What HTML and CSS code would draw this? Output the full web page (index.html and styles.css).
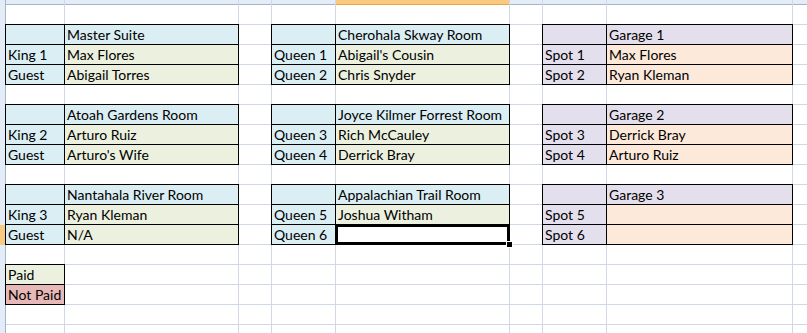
FILE: index.html
```html
<!DOCTYPE html>
<html>
<head>
<meta charset="utf-8">
<link rel="stylesheet" href="styles.css">
</head>
<body>
<div class="sheet">
  <div class="colhead"></div>
  <div class="colhead-sel"></div>
  <div class="rowhead"></div>
  <div class="rowhead-sel"></div>

  <div class="vline v2"></div><div class="vline v3"></div><div class="vline v4"></div>
  <div class="vline v5"></div><div class="vline v6"></div><div class="vline v7"></div>
  <div class="vline v8"></div><div class="vline v9"></div>

  <div class="hline h2"></div><div class="hline h3"></div><div class="hline h4"></div>
  <div class="hline h5"></div><div class="hline h6"></div><div class="hline h7"></div>
  <div class="hline h8"></div><div class="hline h9"></div><div class="hline h10"></div>
  <div class="hline h11"></div><div class="hline h12"></div><div class="hline h13"></div>
  <div class="hline h14"></div><div class="hline h15"></div><div class="hline h16"></div>
  <div class="hline h17"></div><div class="hline h18"></div>

  <div class="block narrow r1 c1">
    <div class="cell blue"></div><div class="cell blue">Master Suite</div>
    <div class="cell blue">King 1</div><div class="cell green">Max Flores</div>
    <div class="cell blue">Guest</div><div class="cell green">Abigail Torres</div>
  </div>
  <div class="block r1 c2">
    <div class="cell blue"></div><div class="cell blue">Cherohala Skway Room</div>
    <div class="cell blue">Queen 1</div><div class="cell green">Abigail's Cousin</div>
    <div class="cell blue">Queen 2</div><div class="cell green">Chris Snyder</div>
  </div>
  <div class="block r1 c3">
    <div class="cell lav"></div><div class="cell lav">Garage 1</div>
    <div class="cell lav">Spot 1</div><div class="cell peach">Max Flores</div>
    <div class="cell lav">Spot 2</div><div class="cell peach">Ryan Kleman</div>
  </div>

  <div class="block narrow r2 c1">
    <div class="cell blue"></div><div class="cell blue">Atoah Gardens Room</div>
    <div class="cell blue">King 2</div><div class="cell green">Arturo Ruiz</div>
    <div class="cell blue">Guest</div><div class="cell green">Arturo's Wife</div>
  </div>
  <div class="block r2 c2">
    <div class="cell blue"></div><div class="cell blue">Joyce Kilmer Forrest Room</div>
    <div class="cell blue">Queen 3</div><div class="cell green">Rich McCauley</div>
    <div class="cell blue">Queen 4</div><div class="cell green">Derrick Bray</div>
  </div>
  <div class="block r2 c3">
    <div class="cell lav"></div><div class="cell lav">Garage 2</div>
    <div class="cell lav">Spot 3</div><div class="cell peach">Derrick Bray</div>
    <div class="cell lav">Spot 4</div><div class="cell peach">Arturo Ruiz</div>
  </div>

  <div class="block narrow r3 c1">
    <div class="cell blue"></div><div class="cell blue">Nantahala River Room</div>
    <div class="cell blue">King 3</div><div class="cell green">Ryan Kleman</div>
    <div class="cell blue">Guest</div><div class="cell green">N/A</div>
  </div>
  <div class="block r3 c2">
    <div class="cell blue"></div><div class="cell blue">Appalachian Trail Room</div>
    <div class="cell blue">Queen 5</div><div class="cell green">Joshua Witham</div>
    <div class="cell blue">Queen 6</div><div class="cell white selected"><span class="handle"></span></div>
  </div>
  <div class="block r3 c3">
    <div class="cell lav"></div><div class="cell lav">Garage 3</div>
    <div class="cell lav">Spot 5</div><div class="cell peach"></div>
    <div class="cell lav">Spot 6</div><div class="cell peach"></div>
  </div>

  <div class="block legend">
    <div class="cell green">Paid</div>
    <div class="cell red">Not Paid</div>
  </div>
</div>
</body>
</html>
```

FILE: styles.css
```css
html, body {
  margin: 0;
  padding: 0;
  background: #ffffff;
  overflow: hidden;
}

.sheet {
  display: grid;
  grid-template-columns: 6px 59px 174px 33px 64px 174px 33px 64px 186px 1fr;
  grid-template-rows: 5px repeat(17, 20px);
  width: 807px;
  height: 333px;
  overflow: hidden;
  font-family: Lato, "Liberation Sans", sans-serif;
  font-size: 14px;
  color: #000;
}

.sheet > div {
  box-sizing: border-box;
}

.colhead {
  grid-row: 1;
  grid-column: 1 / -1;
  background: #e4ecf7;
  border-bottom: 1px solid #9eb6ce;
}

.colhead-sel {
  grid-row: 1;
  grid-column: 6;
  background: #f8cb80;
  border-bottom: 1px solid #f0a03c;
}

.rowhead {
  grid-column: 1;
  grid-row: 1 / -1;
  background: #e4ecf7;
  border-right: 1px solid #9eb6ce;
}

.rowhead-sel {
  grid-column: 1;
  grid-row: 13;
  background: #f8cb80;
  border-right: 1px solid #f0a03c;
}

.vline {
  grid-row: 1 / -1;
  border-right: 1px solid #d0d7e5;
}
.v2 { grid-column: 2; }
.v3 { grid-column: 3; }
.v4 { grid-column: 4; }
.v5 { grid-column: 5; }
.v6 { grid-column: 6; }
.v7 { grid-column: 7; }
.v8 { grid-column: 8; }
.v9 { grid-column: 9; }

.hline {
  grid-column: 2 / -1;
  border-bottom: 1px solid #d0d7e5;
}
.h2 { grid-row: 2; } .h3 { grid-row: 3; } .h4 { grid-row: 4; }
.h5 { grid-row: 5; } .h6 { grid-row: 6; } .h7 { grid-row: 7; }
.h8 { grid-row: 8; } .h9 { grid-row: 9; } .h10 { grid-row: 10; }
.h11 { grid-row: 11; } .h12 { grid-row: 12; } .h13 { grid-row: 13; }
.h14 { grid-row: 14; } .h15 { grid-row: 15; } .h16 { grid-row: 16; }
.h17 { grid-row: 17; } .h18 { grid-row: 18; }

.block {
  margin: -1px 0 0 -1px;
  border: 1px solid #000;
  background: #000;
  display: grid;
  grid-template-columns: 63px 1fr;
  grid-template-rows: repeat(3, 19px);
  gap: 1px;
}
.block.narrow { grid-template-columns: 58px 1fr; }

.r1 { grid-row: 3 / span 3; }
.r2 { grid-row: 7 / span 3; }
.r3 { grid-row: 11 / span 3; }
.c1 { grid-column: 2 / span 2; }
.c2 { grid-column: 5 / span 2; }
.c3 { grid-column: 8 / span 2; }

.legend {
  grid-column: 2;
  grid-row: 15 / span 2;
  grid-template-columns: 1fr;
  grid-template-rows: repeat(2, 19px);
}

.cell {
  line-height: 19px;
  padding-left: 2px;
  white-space: nowrap;
  overflow: hidden;
}

.blue { background: #daeef3; }
.green { background: #ebf1de; }
.lav { background: #e4dfec; }
.peach { background: #fde9d9; }
.red { background: #e6b8b7; }
.white { background: #ffffff; }

.selected {
  position: relative;
  overflow: visible;
  box-shadow: inset 0 0 0 2px #000;
}

.handle {
  position: absolute;
  right: -4px;
  bottom: -4px;
  width: 5px;
  height: 5px;
  background: #000;
  border: 1px solid #fff;
}
```
